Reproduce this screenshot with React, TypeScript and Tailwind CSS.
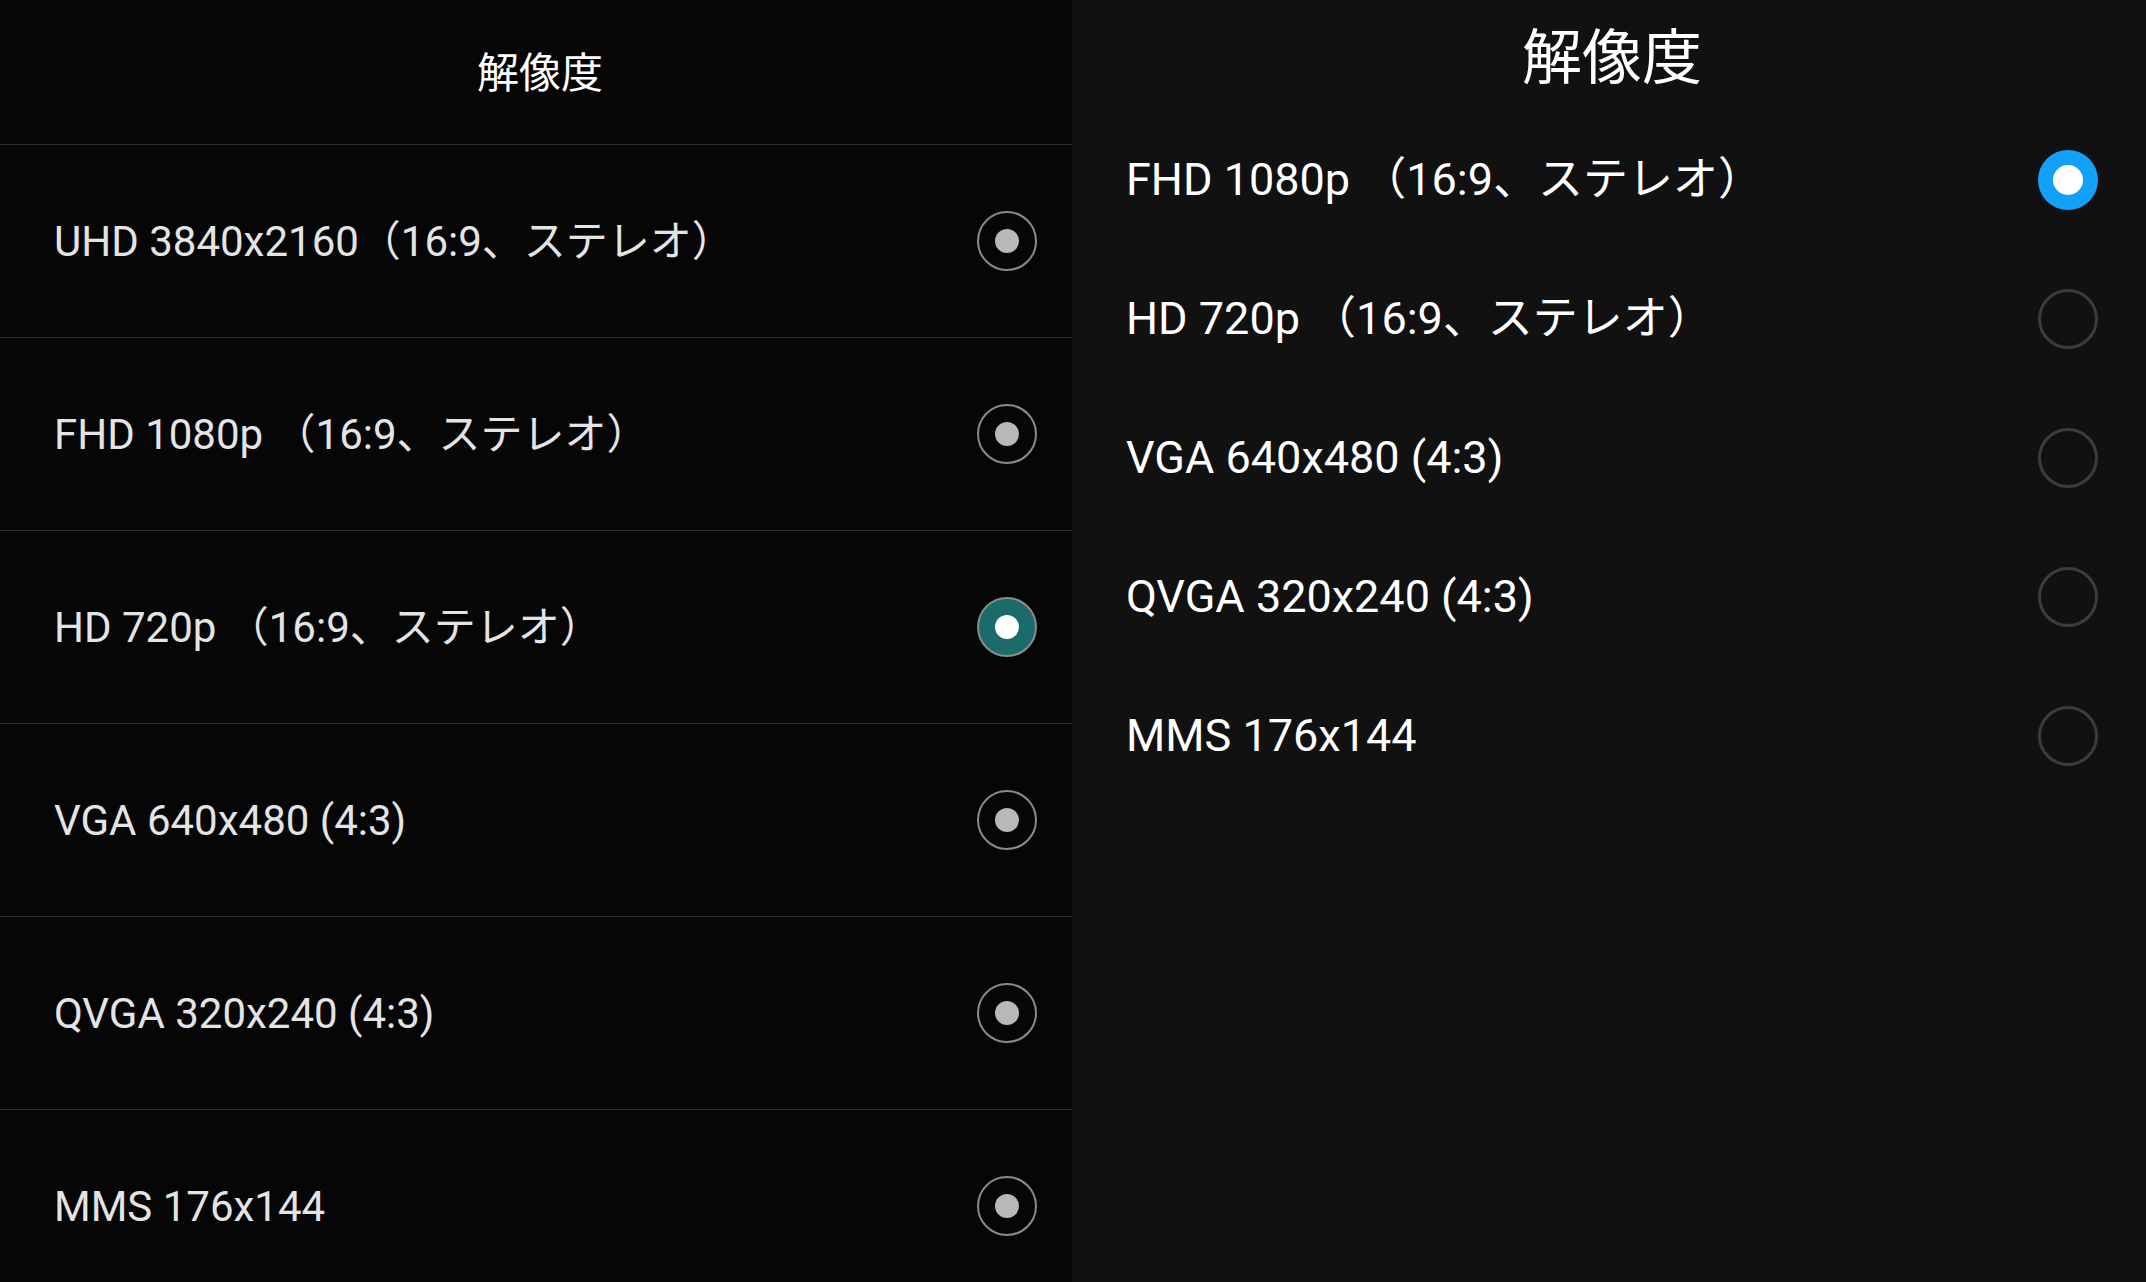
const font = "font-['Roboto','Noto_Sans_CJK_JP',sans-serif]";

const leftItems = [
  { label: 'UHD 3840x2160（16:9、ステレオ）', checked: false },
  { label: 'FHD 1080p （16:9、ステレオ）', checked: false },
  { label: 'HD 720p （16:9、ステレオ）', checked: true },
  { label: 'VGA 640x480 (4:3)', checked: false },
  { label: 'QVGA 320x240 (4:3)', checked: false },
  { label: 'MMS 176x144', checked: false },
];

const rightItems = [
  { label: 'FHD 1080p （16:9、ステレオ）', checked: true },
  { label: 'HD 720p （16:9、ステレオ）', checked: false },
  { label: 'VGA 640x480 (4:3)', checked: false },
  { label: 'QVGA 320x240 (4:3)', checked: false },
  { label: 'MMS 176x144', checked: false },
];

function LeftRadio({ checked }: { checked: boolean }) {
  return (
    <span
      className={
        checked
          ? 'flex h-[60px] w-[60px] items-center justify-center rounded-full border-2 border-[#8a8a8a] bg-[#1b6b6b]'
          : 'flex h-[60px] w-[60px] items-center justify-center rounded-full border-2 border-[#8a8a8a]'
      }
    >
      <span className={checked ? 'h-[24px] w-[24px] rounded-full bg-white' : 'h-[24px] w-[24px] rounded-full bg-[#b8b8b8]'} />
    </span>
  );
}

function RightRadio({ checked }: { checked: boolean }) {
  if (checked) {
    return (
      <span className="flex h-[60px] w-[60px] items-center justify-center rounded-full bg-[#12a0f8]">
        <span className="h-[30px] w-[30px] rounded-full bg-white" />
      </span>
    );
  }
  return <span className="h-[60px] w-[60px] rounded-full border-[3px] border-[#3c3c3c]" />;
}

export default function App() {
  return (
    <div className={`flex h-[1282px] w-full overflow-hidden ${font}`}>
      {/* 左：旧スタイル */}
      <div className="flex w-[1072px] shrink-0 flex-col bg-[#060606]">
        <div className="flex h-[144px] shrink-0 items-center justify-center pl-[8px] pt-[2px] text-[42px] text-white">解像度</div>
        {leftItems.map((item) => (
          <div
            key={item.label}
            className="flex h-[193px] shrink-0 items-center justify-between border-t border-[#2c2c2c] pl-[54px] pr-[35px]"
          >
            <span className="text-[42px] text-[#e4e4e4]">{item.label}</span>
            <LeftRadio checked={item.checked} />
          </div>
        ))}
      </div>

      {/* 右：新スタイル */}
      <div className="flex flex-1 flex-col bg-[#111111]">
        <div className="flex h-[110px] shrink-0 items-center justify-center pl-[6px] pt-[8px] text-[60px] text-white">解像度</div>
        {rightItems.map((item) => (
          <div key={item.label} className="flex h-[139px] shrink-0 items-center justify-between pl-[54px] pr-[48px]">
            <span className="text-[45px] text-white">{item.label}</span>
            <RightRadio checked={item.checked} />
          </div>
        ))}
      </div>
    </div>
  );
}
